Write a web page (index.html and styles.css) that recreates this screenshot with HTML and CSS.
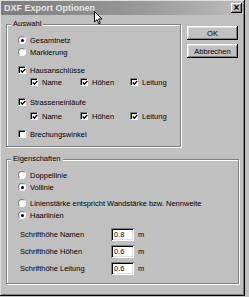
FILE: index.html
```html
<!DOCTYPE html>
<html>
	<head>
		<meta charset="utf-8">
		<title>DXF Export Optionen</title>
		<link rel="stylesheet" href="styles.css">
	</head>
	<body>
		<div class="win">
			<div class="title">
				<span>DXF Export Optionen</span>
				<span class="close">&times;</span>
			</div>
			<div class="main">
				<div class="top">
					<fieldset class="group sel">
						<legend>Auswahl</legend>
						<div class="opt"><span class="radio on"></span>Gesamtnetz</div>
						<div class="opt"><span class="radio"></span>Markierung</div>
						<div class="opt sp6"><span class="chk"><svg viewBox="0 0 6 6"><path d="M0.8 2.6 L2.4 4.3 L5.3 0.9"/></svg></span>Hausanschlüsse</div>
						<div class="sub">
							<div class="opt"><span class="chk"><svg viewBox="0 0 6 6"><path d="M0.8 2.6 L2.4 4.3 L5.3 0.9"/></svg></span>Name</div>
							<div class="opt"><span class="chk"><svg viewBox="0 0 6 6"><path d="M0.8 2.6 L2.4 4.3 L5.3 0.9"/></svg></span>Höhen</div>
							<div class="opt"><span class="chk"><svg viewBox="0 0 6 6"><path d="M0.8 2.6 L2.4 4.3 L5.3 0.9"/></svg></span>Leitung</div>
						</div>
						<div class="opt sp8"><span class="chk"><svg viewBox="0 0 6 6"><path d="M0.8 2.6 L2.4 4.3 L5.3 0.9"/></svg></span>Strasseneinläufe</div>
						<div class="sub sp2">
							<div class="opt"><span class="chk"><svg viewBox="0 0 6 6"><path d="M0.8 2.6 L2.4 4.3 L5.3 0.9"/></svg></span>Name</div>
							<div class="opt"><span class="chk"><svg viewBox="0 0 6 6"><path d="M0.8 2.6 L2.4 4.3 L5.3 0.9"/></svg></span>Höhen</div>
							<div class="opt"><span class="chk"><svg viewBox="0 0 6 6"><path d="M0.8 2.6 L2.4 4.3 L5.3 0.9"/></svg></span>Leitung</div>
						</div>
						<div class="opt sp6"><span class="chk"></span>Brechungswinkel</div>
					</fieldset>
					<div class="buttons">
						<button class="btn">OK</button>
						<button class="btn">Abbrechen</button>
					</div>
				</div>
				<fieldset class="group props">
					<legend>Eigenschaften</legend>
					<div class="opt"><span class="radio"></span>Doppellinie</div>
					<div class="opt"><span class="radio on"></span>Vollinie</div>
					<div class="opt sp4"><span class="radio"></span>Linienstärke entspricht Wandstärke bzw. Nennweite</div>
					<div class="opt"><span class="radio on"></span>Haarlinien</div>
					<div class="field sp6"><span class="lbl">Schrifthöhe Namen</span><span class="inp">0.8</span><span class="unit">m</span></div>
					<div class="field sp3"><span class="lbl">Schrifthöhe Höhen</span><span class="inp">0.6</span><span class="unit">m</span></div>
					<div class="field sp3"><span class="lbl">Schrifthöhe Leitung</span><span class="inp">0.6</span><span class="unit">m</span></div>
				</fieldset>
			</div>
			<svg class="cursor" width="9" height="14" viewBox="0 0 9 14">
				<path d="M0.5 0.5 L0.5 11 L3 8.6 L4.8 12.8 L6.3 12.1 L4.6 8 L8 8 Z" fill="#fff" stroke="#000" stroke-width="1"/>
			</svg>
		</div>
	</body>
</html>
```

FILE: styles.css
```css
*{
	margin: 0;
	padding: 0;
	box-sizing: border-box;
}
html, body{
	background: #c0c0c0;
}
body{
	font-family: "Liberation Sans", Arial, sans-serif;
	font-size: 7.5px;
	color: #000;
}
.win{
	position: relative;
	width: 245px;
	height: 296px;
	padding: 1px 2px 2px 1px;
	background: #c0c0c0;
	box-shadow: inset -1px -1px #000, inset 1px 1px #dfdfdf, inset -2px -2px #808080;
}
.title{
	display: flex;
	align-items: center;
	height: 14px;
	padding: 0 1px 0 3px;
	background: linear-gradient(90deg, #7c7c7c, #9a9a9a 60%, #bdbdbd);
	color: #e6e6e6;
	font-weight: bold;
	font-size: 9px;
}
.close{
	margin-left: auto;
	width: 11px;
	height: 10px;
	background: #c0c0c0;
	color: #000;
	font-size: 10px;
	line-height: 9px;
	text-align: center;
	box-shadow: inset -1px -1px #000, inset 1px 1px #fff, inset -2px -2px #808080;
}
.main{
	padding: 4px 0 0 5px;
}
.top{
	display: flex;
	align-items: flex-start;
}
.group{
	border: 1px solid #808080;
	box-shadow: 1px 1px 0 #fff, inset 1px 1px 0 #fff;
	min-width: 0;
}
.group legend{
	padding: 0 2px;
	margin-left: -7px;
	line-height: 10px;
	background: #c0c0c0;
}
.sel{
	width: 175px;
	padding: 5px 0 6px 11px;
}
.props{
	width: 233px;
	margin-top: 7px;
	padding: 5px 0 8px 11px;
}
.buttons{
	display: flex;
	flex-direction: column;
	gap: 4px;
	margin: 7px 0 0 6px;
}
.btn{
	width: 51px;
	height: 14px;
	border: 0;
	background: #c0c0c0;
	font-family: inherit;
	font-size: 7.5px;
	color: #000;
	box-shadow: inset -1px -1px #000, inset 1px 1px #fff, inset -2px -2px #808080, inset 2px 2px #dfdfdf;
}
.opt{
	display: flex;
	align-items: center;
	height: 12px;
	white-space: nowrap;
}
.sub{
	display: flex;
	padding-left: 12px;
}
.sub .opt{
	width: 50px;
}
.sp2{margin-top: 2px;}
.sp3{margin-top: 3px;}
.sp4{margin-top: 4px;}
.sp6{margin-top: 6px;}
.sp8{margin-top: 8px;}
.radio, .chk{
	flex: none;
	width: 8px;
	height: 8px;
	margin-right: 4px;
	background: #fff;
	border: 1px solid;
	border-color: #808080 #fff #fff #808080;
}
.radio{
	border-radius: 50%;
	display: flex;
	align-items: center;
	justify-content: center;
}
.radio.on::after{
	content: "";
	width: 3px;
	height: 3px;
	border-radius: 50%;
	background: #000;
}
.chk{
	box-shadow: inset 1px 1px #000;
	padding: 1px 0 0 1px;
}
.chk svg{
	display: block;
	width: 6px;
	height: 6px;
}
.chk path{
	fill: none;
	stroke: #000;
	stroke-width: 1.4;
}
.field{
	display: flex;
	align-items: center;
	height: 14px;
}
.lbl{
	width: 93px;
	padding-left: 2px;
}
.inp{
	width: 23px;
	height: 13px;
	padding: 2px 0 0 3px;
	background: #fff;
	line-height: 9px;
	box-shadow: inset 1px 1px #808080, inset -1px -1px #fff, inset 2px 2px #000, inset -2px -2px #dfdfdf;
}
.unit{
	margin-left: 4px;
}
.cursor{
	position: absolute;
	left: 94px;
	top: 11px;
}
```
